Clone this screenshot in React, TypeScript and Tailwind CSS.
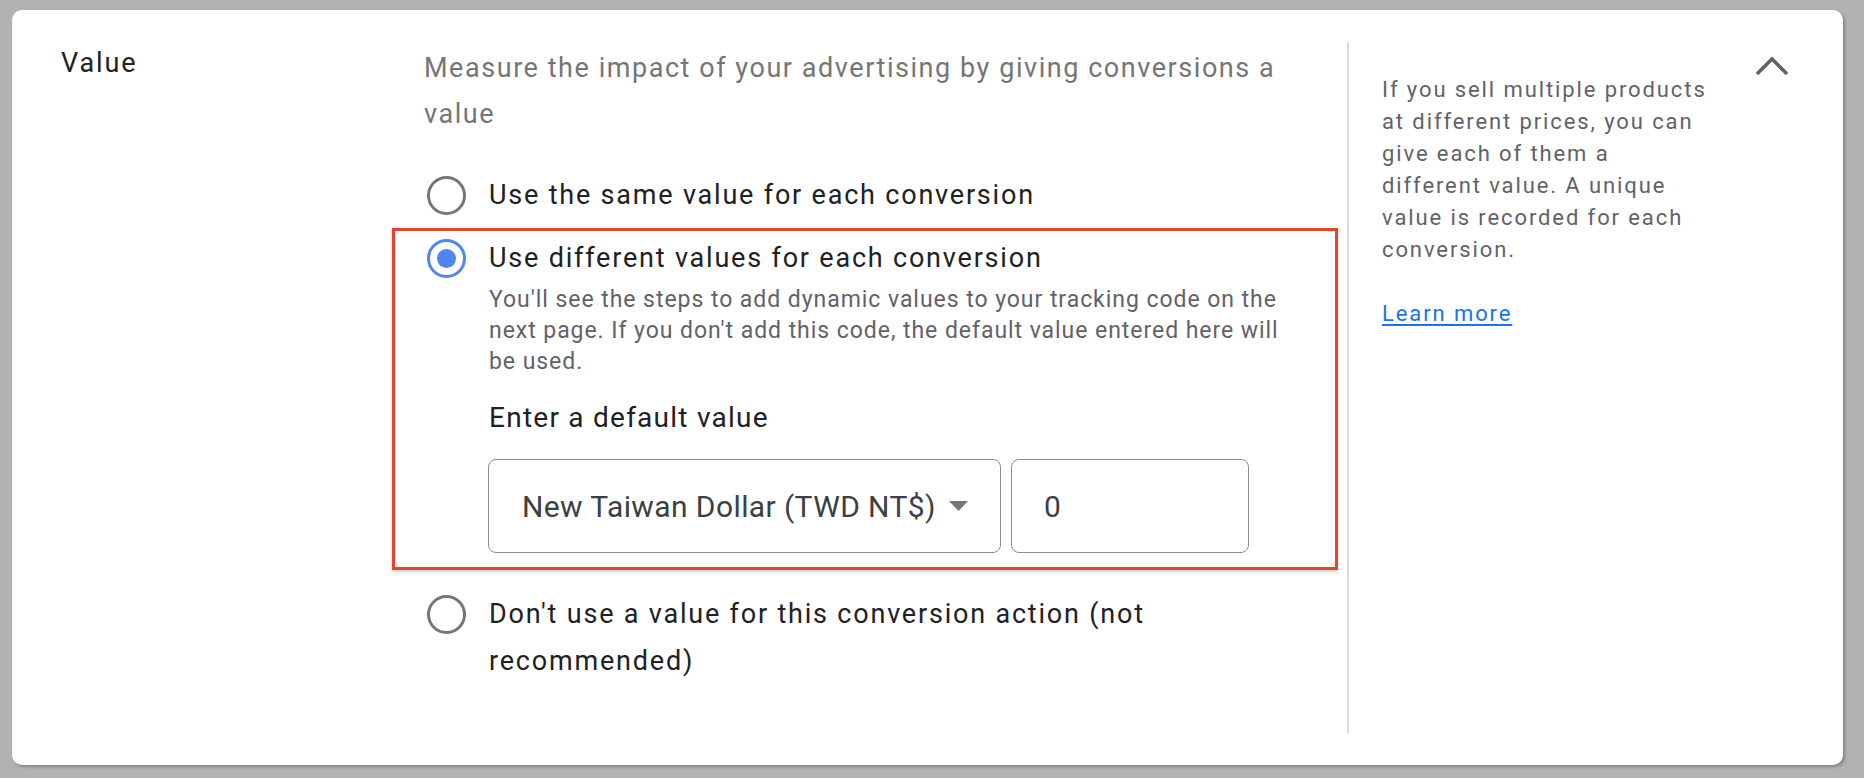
import { useState } from "react";

function Radio({ checked }: { checked?: boolean }) {
  return (
    <span
      className={`mt-[4px] flex h-[39px] w-[39px] shrink-0 items-center justify-center rounded-full border-[3px] ${
        checked ? "border-[#4f86ec]" : "border-[#767676]"
      }`}
    >
      {checked && <span className="h-[19px] w-[19px] rounded-full bg-[#4f86ec]" />}
    </span>
  );
}

export default function App() {
  const [value, setValue] = useState("0");

  return (
    <div className="min-h-screen bg-[#b2b2b2] pb-[13px] pl-[12px] pr-[21px] pt-[10px] font-['Roboto',sans-serif]">
      <div className="flex h-[755px] rounded-[10px] bg-white shadow-[2px_2px_3px_rgba(0,0,0,0.25)]">
        {/* section title */}
        <div className="w-[412px] shrink-0 pl-[49px] pt-[30px] text-[27px] leading-[46px] tracking-[1.9px] text-[#202124]">
          Value
        </div>

        {/* options */}
        <div className="w-[911px] shrink-0 pr-[35px] pt-[35px]">
          <p className="text-[27px] leading-[46px] tracking-[1.55px] text-[#757575]">
            Measure the impact of your advertising by giving conversions a value
          </p>

          <div className="mt-[35px] flex items-start gap-[23px] pl-[3px]">
            <Radio />
            <span className="text-[27px] leading-[46px] tracking-[1.8px] text-[#202124]">
              Use the same value for each conversion
            </span>
          </div>

          <div className="-ml-[32px] -mr-[38px] mt-[10px] border-[3px] border-[#e5432a] pb-[14px] pl-[32px] pr-[35px] pt-[4px] shadow-[0_2px_3px_rgba(0,0,0,0.2)]">
            <div className="flex items-start gap-[23px]">
              <Radio checked />
              <div className="flex-1">
                <div className="text-[27px] leading-[46px] tracking-[1.8px] text-[#202124]">
                  Use different values for each conversion
                </div>
                <p className="mt-[3px] text-[23px] leading-[31px] tracking-[0.95px] text-[#5f6368]">
                  You'll see the steps to add dynamic values to your tracking code on the next page. If you don't add this code, the default value entered here will be used.
                </p>
                <div className="mt-[21px] text-[28px] leading-[40px] tracking-[1.25px] text-[#202124]">
                  Enter a default value
                </div>
                <div className="-ml-px mt-[21px] flex gap-[10px]">
                  <div className="flex h-[94px] w-[513px] items-center justify-between rounded-[8px] border-[1.5px] border-[#8a8d91] pl-[33px] pr-[32px]">
                    <span className="text-[30px] tracking-[0.4px] text-[#3c4043]">New Taiwan Dollar (TWD NT$)</span>
                    <svg width="19" height="10" viewBox="0 0 19 10">
                      <path d="M0 0h19L9.5 10z" fill="#757575" />
                    </svg>
                  </div>
                  <input
                    value={value}
                    onChange={(e) => setValue(e.target.value)}
                    className="h-[94px] w-[238px] rounded-[8px] border-[1.5px] border-[#8a8d91] pl-[32px] text-[30px] text-[#3c4043] outline-none"
                  />
                </div>
              </div>
            </div>
          </div>

          <div className="mt-[21px] flex items-start gap-[23px] pl-[3px]">
            <Radio />
            <span className="text-[27px] leading-[47px] tracking-[1.8px] text-[#202124]">
              Don't use a value for this conversion action (not recommended)
            </span>
          </div>
        </div>

        {/* divider */}
        <div className="ml-[12px] mt-[32px] h-[691px] w-[2px] shrink-0 bg-[#dadce0]" />

        {/* help */}
        <div className="w-[363px] shrink-0 pl-[33px] pt-[64px] text-[22px] leading-[32px] tracking-[1.9px] text-[#5f6368]">
          <p>
            If you sell multiple products at different prices, you can give each of them a different value. A unique value is recorded for each conversion.
          </p>
          <a href="#" className="mt-[32px] inline-block text-[#1a73e8] underline underline-offset-[3px]">
            Learn more
          </a>
        </div>

        <div className="ml-[43px] pt-[46px]">
          <svg width="34" height="20" viewBox="0 0 34 20">
            <path d="M2 18L17 3l15 15" fill="none" stroke="#5f6368" strokeWidth="3.5" />
          </svg>
        </div>
      </div>
    </div>
  );
}
